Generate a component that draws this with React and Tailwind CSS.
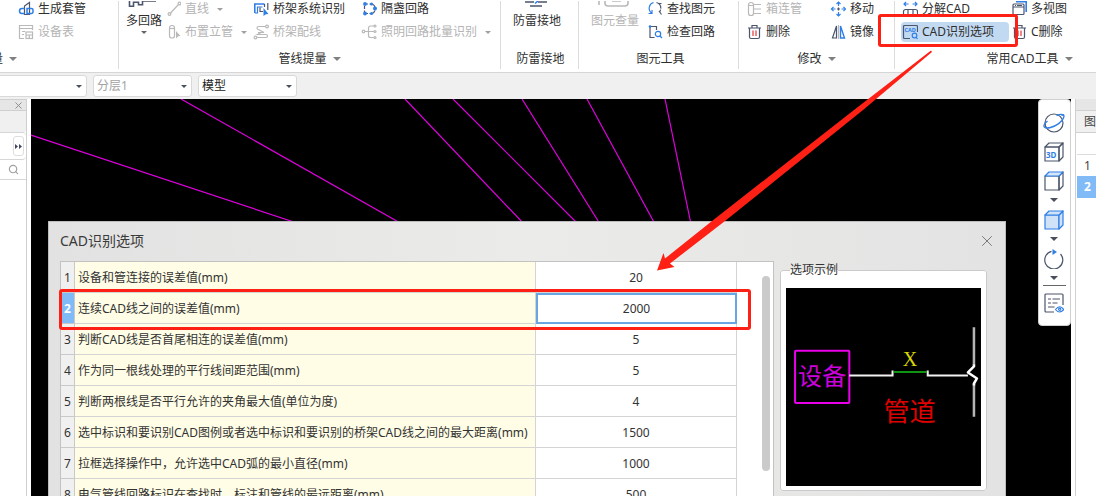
import { useState } from 'react';
import { X, Search } from 'lucide-react';

const INK = '#4b556b';
const BLUE = '#2f7fe6';
const GRAY = '#b9b9b9';

// Small triangle used by every drop-down
const Caret = ({ className = 'text-[#808080]' }) => (
  <svg width="8" height="4" viewBox="0 0 8 4" className={`shrink-0 ${className}`} aria-hidden="true">
    <path d="M0 0h8L4 4z" fill="currentColor" />
  </svg>
);

const SmallCaret = ({ className = 'text-[#4a4f60]' }) => (
  <svg width="6" height="3" viewBox="0 0 6 3" className={`shrink-0 ${className}`} aria-hidden="true">
    <path d="M0 0h6L3 3z" fill="currentColor" />
  </svg>
);

const Glyph = ({ size = 16, color = INK, children }) => (
  <svg width={size} height={size} viewBox={`0 0 ${size} ${size}`} fill="none" stroke={color} strokeWidth="1.2" className="shrink-0" aria-hidden="true">
    {children}
  </svg>
);

const icons = {
  sleeve: (
    <Glyph>
      <path d="M6.5 13.500V5L11.500 1.500V13.500z" />
      <path d="M6.500 7.500H4a2.500 2.500 0 0 0 0 5h2.500" stroke={BLUE} strokeWidth="1.500" />
      <path d="M9 7.500h4.500a1.500 1.500 0 0 1 1.500 1.500v2a1.500 1.500 0 0 1-1.500 1.500H9z" stroke={BLUE} strokeWidth="1.500" />
    </Glyph>
  ),
  deviceTable: (
    <Glyph color={GRAY}>
      <path d="M6 14.5H1.5v-13h13V6M1.5 4.5h13M4 7.5h3M4 10.5h2" />
      <rect x="8" y="8" width="6.5" height="6.5" />
      <path d="M8 11h6.5M11.3 11v3.5" />
    </Glyph>
  ),
  line: (
    <Glyph color={GRAY}>
      <circle cx="4.5" cy="13" r="1.4" />
      <circle cx="14.500" cy="2.500" r="1.4" />
      <path d="M5.500 12L13.500 3.500" />
    </Glyph>
  ),
  riser: (
    <Glyph color={GRAY}>
      <rect x="4.5" y="1.5" width="5" height="12.5" rx="2.3" />
      <path d="M4.5 4.5h5" />
      <path d="M11 7l4.500 5-2.300.2-2.200 2.300z" fill={GRAY} stroke="none" />
    </Glyph>
  ),
  tray: (
    <Glyph>
      <path d="M1.800 12V3h9.700" stroke={BLUE} strokeWidth="1.600" />
      <path d="M1.800 12h2.700V6h5" stroke={BLUE} />
      <path d="M14.800 2v7M7 6.500v4h3M11.500 3v3" />
      <path d="M10.500 7l5 6-2.600.2-2.400 1.800z" fill={BLUE} stroke="none" />
    </Glyph>
  ),
  trayWire: (
    <Glyph color={GRAY}>
      <circle cx="14" cy="2.500" r="1.400" />
      <circle cx="2.500" cy="13.500" r="1.400" />
      <path d="M12.500 2.500H5.500a1.500 1.500 0 0 0 0 3L11 8.500H5M4 13.500h9a1.500 1.500 0 0 0 0-3H4.500L8 8.500" />
    </Glyph>
  ),
  loop: (
    <Glyph>
      <path d="M4 3h7M4 12.500h7M3.500 5v6" strokeDasharray="3 1.500" />
      <path d="M11 3a5 5 0 0 1 3 3M11 12.500a5 5 0 0 0 3-3" />
      <circle cx="4" cy="3" r="1.900" fill={BLUE} stroke="none" />
      <circle cx="4" cy="12.500" r="1.900" fill={BLUE} stroke="none" />
      <circle cx="14" cy="7.500" r="2" fill={BLUE} stroke="none" />
      <circle cx="10.500" cy="3" r="1.600" fill={BLUE} stroke="none" />
      <circle cx="10.500" cy="12.500" r="1.600" fill={BLUE} stroke="none" />
    </Glyph>
  ),
  lighting: (
    <Glyph color={GRAY}>
      <circle cx="2.500" cy="7.500" r="1.300" />
      <path d="M4 7.500h9M13 2H9.500a2 2 0 0 0-2 2v7.500a2 2 0 0 0 2 2H13" />
      <circle cx="14" cy="2" r="1" />
      <circle cx="14" cy="7.500" r="1" />
      <circle cx="14" cy="13.500" r="1" />
    </Glyph>
  ),
  find: (
    <Glyph>
      <path d="M6.500 1.500a6 6 0 0 0-2 10.500M1.500 12.500h3.500V9" stroke={BLUE} />
      <path d="M9.500 1.500a6 6 0 0 1 3 9.500M14.500 2.500h-3.500" strokeDasharray="8 1" />
      <path d="M12 10l2.500 3.500" />
    </Glyph>
  ),
  check: (
    <Glyph>
      <path d="M3 3v10.500h4.500M3 2.500h6.500v3.500" />
      <circle cx="3" cy="2.500" r="1.300" fill={BLUE} stroke="none" />
      <circle cx="11" cy="10" r="2.700" stroke={BLUE} />
      <path d="M13 12l2 2" stroke={BLUE} />
    </Glyph>
  ),
  boxPipe: (
    <Glyph color={GRAY}>
      <rect x="2.500" y="1.500" width="5" height="13" rx="2.300" />
      <path d="M2.500 4.500h5M8 3.500h7M8 8h7M8 12.500h7" />
    </Glyph>
  ),
  trash: (
    <Glyph>
      <path d="M2 4h13M6 4V1.500h5V4M3.500 4v9a1.500 1.500 0 0 0 1.500 1.500h7a1.500 1.500 0 0 0 1.500-1.500V4" />
      <path d="M7 6.500v5.500M10 6.500v5.500" stroke="#e0393e" />
    </Glyph>
  ),
  move: (
    <Glyph color={BLUE}>
      <path d="M8.500 1v4M8.500 11v4M1.500 8h4M11.500 8h4" />
      <path d="M6.500 3l2-2 2 2M6.500 13l2 2 2-2M3.500 6l-2 2 2 2M13.500 6l2 2-2 2" />
      <path d="M8.500 6.500v3M7 8h3" stroke={INK} />
    </Glyph>
  ),
  mirror: (
    <Glyph>
      <path d="M6.500 2v12H2.500z" />
      <path d="M10.500 2v12h4z" stroke={BLUE} strokeWidth="1.400" />
      <path d="M8.500 1v14" stroke={GRAY} />
    </Glyph>
  ),
  explode: (
    <Glyph>
      <path d="M2 3h4.500M10.500 3H15M4 1L2 3l2 2M13 1l2 2-2 2" stroke={BLUE} />
      <path d="M1.500 13.500v-3a2 2 0 0 1 2-2h10a2 2 0 0 1 2 2v3zM6 8.500v5M11 8.500v5" />
    </Glyph>
  ),
  cadOptions: (
    <Glyph>
      <path d="M8 14.500H2.500a1 1 0 0 1-1-1v-11a1 1 0 0 1 1-1h12a1 1 0 0 1 1 1V8" />
      <text x="2.500" y="7.500" fontSize="5.500" fontWeight="700" fill={BLUE} stroke="none">CAD</text>
      <circle cx="12.500" cy="11.500" r="2.300" stroke={BLUE} />
      <path d="M14 13.300l1.500 1.500" stroke={BLUE} />
    </Glyph>
  ),
  views: (
    <Glyph>
      <path d="M5 .8h10.200V11" stroke={BLUE} strokeWidth="1.600" />
      <rect x="2" y="3" width="11" height="10.500" rx="1" fill="#fff" />
      <path d="M2 6h11M4 4.500h1M6 4.500h5" />
    </Glyph>
  ),
};

const RibbonItem = ({ icon, label, caret, disabled, active }) => (
  <button
    type="button"
    disabled={disabled}
    aria-pressed={active}
    className={`flex h-4 items-center gap-1 text-xs leading-4 whitespace-nowrap ${disabled ? 'text-[#b4b4b4]' : 'text-[#2f2f2f]'}`}
  >
    {icons[icon]}
    <span>{label}</span>
    {caret && <span className="pl-1"><SmallCaret className="text-[#a0a0a0]" /></span>}
  </button>
);

const BigItem = ({ label, caret, disabled, children }) => (
  <button
    type="button"
    disabled={disabled}
    className={`flex h-[39px] shrink-0 flex-col items-center text-xs leading-4 whitespace-nowrap ${disabled ? 'text-[#b4b4b4]' : 'text-[#2f2f2f]'}`}
  >
    <svg width="36" height="12" viewBox="0 0 36 12" fill="none" strokeWidth="1.600" className="shrink-0" aria-hidden="true">
      {children}
    </svg>
    <span>{label}</span>
    {caret && <span className="pt-0.5"><SmallCaret className="text-[#666]" /></span>}
  </button>
);

const Column = ({ className = '', children }) => (
  <div className={`flex shrink-0 flex-col items-start gap-[7px] ${className}`}>{children}</div>
);

const RibbonGroup = ({ label, caret, className, labelClass = 'justify-center', children }) => (
  <section className={`flex h-[68px] shrink-0 flex-col justify-between border-r border-[#dcdcdc] ${className}`}>
    <div className="flex">{children}</div>
    <div className={`flex h-5 items-center gap-1.5 text-xs text-[#2f2f2f] ${labelClass}`}>
      <span>{label}</span>
      {caret && <Caret />}
    </div>
  </section>
);

const Ribbon = () => (
  <header className="flex shrink-0 overflow-hidden border-b border-[#d6d6d6] bg-white pt-px pb-[3px]">
    <RibbonGroup label="量" caret className="w-[119px] pl-[18px]" labelClass="-ml-[27px]">
      <Column>
        <RibbonItem icon="sleeve" label="生成套管" />
        <RibbonItem icon="deviceTable" label="设备表" disabled />
      </Column>
    </RibbonGroup>

    <RibbonGroup label="管线提量" caret className="w-[382px]">
      <div className="flex pl-[7px]">
        <BigItem label="多回路" caret>
          <path d="M3.500 0v5.200h4V1.200h5v2.500h4V0M16 0h14" stroke={INK} />
        </BigItem>
        <Column className="ml-[3px] w-[88px]">
          <RibbonItem icon="line" label="直线" caret disabled />
          <RibbonItem icon="riser" label="布置立管" caret disabled />
        </Column>
        <Column className="w-[108px]">
          <RibbonItem icon="tray" label="桥架系统识别" />
          <RibbonItem icon="trayWire" label="桥架配线" disabled />
        </Column>
        <Column>
          <RibbonItem icon="loop" label="隔盏回路" />
          <RibbonItem icon="lighting" label="照明回路批量识别" caret disabled />
        </Column>
      </div>
    </RibbonGroup>

    <RibbonGroup label="防雷接地" className="w-[78px] pl-0.5">
      <div className="pl-2.5">
        <BigItem label="防雷接地">
          <path d="M6 1h9M19 1h9M11 5h12" stroke={INK} />
          <path d="M19 0l-3 2.500" stroke={BLUE} />
        </BigItem>
      </div>
    </RibbonGroup>

    <RibbonGroup label="图元工具" className="w-[160px] pl-1">
      <div className="flex pl-2">
        <BigItem label="图元查量" disabled>
          <path d="M2 0v4M8 0v2a3 3 0 0 0 3 3h17a3 3 0 0 0 3-3V0M15 0h9" stroke={GRAY} />
        </BigItem>
        <Column className="ml-2">
          <RibbonItem icon="find" label="查找图元" />
          <RibbonItem icon="check" label="检查回路" />
        </Column>
      </div>
    </RibbonGroup>

    <RibbonGroup label="修改" caret className="w-[156px]">
      <div className="flex pl-[7px]">
        <Column className="w-[84px]">
          <RibbonItem icon="boxPipe" label="箱连管" disabled />
          <RibbonItem icon="trash" label="删除" />
        </Column>
        <Column>
          <RibbonItem icon="move" label="移动" />
          <RibbonItem icon="mirror" label="镜像" />
        </Column>
      </div>
    </RibbonGroup>

    <RibbonGroup label="常用CAD工具" caret className="w-[270px]">
      <div className="flex pl-1.5">
        <div className="flex w-[108px] shrink-0 flex-col items-start gap-[5px]">
          <div className="pl-px"><RibbonItem icon="explode" label="分解CAD" /></div>
          <div className="w-full rounded bg-[#c2d9f2] py-0.5 pl-px">
            <RibbonItem icon="cadOptions" label="CAD识别选项" active />
          </div>
        </div>
        <Column className="ml-0.5">
          <RibbonItem icon="views" label="多视图" />
          <RibbonItem icon="trash" label="C删除" />
        </Column>
      </div>
    </RibbonGroup>
  </header>
);

const PickList = ({ label, options, className }) => (
  <div className={`relative ${className}`}>
    <select aria-label={label} className="block h-[22px] w-full appearance-none rounded-[3px] border border-[#d9d9d9] bg-white pl-[3px] text-xs leading-4">
      {options.map((o) => <option key={o}>{o}</option>)}
    </select>
    <span className="pointer-events-none absolute inset-y-0 right-[5px] flex items-center"><SmallCaret /></span>
  </div>
);

const FilterBar = () => (
  <div className="flex h-[26px] shrink-0 items-start gap-1.5 bg-[#f0f0f0] pt-0.5">
    <PickList label="楼层" options={['']} className="-ml-1 w-[91px]" />
    <PickList label="分层" options={['分层1']} className="w-[99px] text-[#a3a3a3]" />
    <PickList label="空间" options={['模型']} className="w-[99px] text-[#222]" />
  </div>
);

const LeftPanel = () => (
  <aside className="mr-1 flex w-[27px] shrink-0 flex-col border-r border-[#cfcfcf] bg-white">
    <div className="flex h-3 items-center justify-end border-y border-[#cfcfcf] bg-[#e6e6e6] pr-0.5">
      <button type="button" aria-label="关闭面板" className="text-[#888]"><X size={11} /></button>
    </div>
    <div className="h-[21px] bg-[#f0f0f0]" />
    <div className="flex h-7 items-center justify-end rounded-r border-y border-[#d6d6d6] pr-0.5">
      <button type="button" aria-label="展开" className="flex h-5 w-[11px] items-center justify-center rounded-[3px] border border-[#dedede]">
        <svg width="7" height="5" viewBox="0 0 7 5" className="shrink-0"><path d="M0 0l3 2.500L0 5zM4 0l3 2.500L4 5z" fill="#434a60" /></svg>
      </button>
    </div>
    <div className="flex h-5 items-center justify-end border-b border-[#d6d6d6] pr-[7px]">
      <button type="button" aria-label="搜索" className="text-[#a0a0a0]"><Search size={11} strokeWidth={2.500} /></button>
    </div>
  </aside>
);

const RightPanel = () => (
  <aside className="ml-1 flex w-[21px] shrink-0 flex-col overflow-hidden border-l border-[#d0d0d0] bg-white text-xs text-[#444]">
    <div className="h-3 border-b border-[#d0d0d0] bg-[#e6e6e6]" />
    <div className="flex h-[22px] items-center border-b border-[#d0d0d0] bg-[#f0f0f0] pl-2 whitespace-nowrap">图</div>
    <ol className="flex flex-col pt-[21px] pl-px">
      <li className="flex h-[22px] items-center border-t border-[#dcdcdc] pl-[7px]">1</li>
      <li className="flex h-[22px] items-center bg-[#80bbf8] pl-[7px] font-bold text-white">2</li>
    </ol>
  </aside>
);

const Cube = ({ fill = 'none', stroke = INK, top = 'none', topStroke = INK, children }) => (
  <Glyph size={20} color={stroke}>
    <path d="M1 5h14v14H1z" fill={fill} strokeLinejoin="round" />
    <path d="M15 5l4-4v14l-4 4z" fill={fill} strokeLinejoin="round" />
    <path d="M1 5l4-4h14l-4 4z" fill={top} stroke={topStroke} strokeLinejoin="round" />
    {children}
  </Glyph>
);

const ViewTool = ({ label, children }) => (
  <button type="button" aria-label={label} className="flex h-[29px] items-center justify-center">{children}</button>
);

const ViewMenu = ({ label }) => (
  <button type="button" aria-label={label} className="flex h-2.5 items-center justify-center"><Caret className="text-[#4b4f5c]" /></button>
);

const ViewTools = () => (
  <nav className="relative flex w-[33px] shrink-0 flex-col self-start rounded border border-[#cfcfcf] bg-white pt-2 pr-0.5 pb-2">
    <ViewTool label="动态观察">
      <Glyph size={22}>
        <circle cx="11" cy="11" r="9" />
        <path d="M18.500 3.500C20.500 1.800 21.500 3 20.500 6c-1.500 4-7 8-13 9.500-4 1-7 .5-6.500-2 .3-1.500 1.500-3 3.500-4.500" stroke={BLUE} strokeWidth="1.400" />
        <path d="M13.500 3.500c3-1.200 6-1.500 7 0" stroke={BLUE} strokeWidth="1.400" />
      </Glyph>
    </ViewTool>
    <ViewTool label="三维">
      <Cube><text x="2" y="15.500" fontSize="8" fontWeight="700" fill={BLUE} stroke="none">3D</text></Cube>
    </ViewTool>
    <ViewTool label="俯视"><Cube top="#d6e7fb" topStroke={BLUE} /></ViewTool>
    <ViewMenu label="视角" />
    <ViewTool label="实体显示"><Cube fill="#cfe2f8" stroke={BLUE} top="#cfe2f8" topStroke={BLUE} /></ViewTool>
    <ViewMenu label="显示方式" />
    <ViewTool label="旋转">
      <Glyph size={20}>
        <path d="M7.500 2.300A9 9 0 1 0 16.500 5" />
        <path d="M8.500 0L13 3 8.500 6z" fill={BLUE} stroke="none" />
      </Glyph>
    </ViewTool>
    <ViewMenu label="旋转方式" />
    <hr className="mr-0.5 ml-1 my-0.5 border-[#666]" />
    <ViewTool label="显示设置">
      <Glyph size={20}>
        <path d="M10 19H2a1 1 0 0 1-1-1V2a1 1 0 0 1 1-1h16a1 1 0 0 1 1 1v10" />
        <path d="M4 6h3M8.500 6H16M4 10h3M8.500 10h5M4 14h6.500" />
        <path d="M11.500 16.500q4.300-5.500 8.300 0q-4.300 5-8.300 0z" stroke={BLUE} />
        <circle cx="15.700" cy="16.300" r="1.100" stroke={BLUE} />
      </Glyph>
    </ViewTool>
  </nav>
);

// Wires of the drawing that stay visible around the dialog
const Wires = () => (
  <svg width="960" height="125" viewBox="31 99 960 125" stroke="#e000e0" strokeWidth="1.200" className="block" aria-hidden="true">
    <path d="M31 135L300 224M181 99L402 224M405 99L524 224M453 99L578 224M522 99L600 224M587 99L655 224M665 99L691 224" />
  </svg>
);

const initialOptions = [
  { label: '设备和管连接的误差值(mm)', value: '20' },
  { label: '连续CAD线之间的误差值(mm)', value: '2000' },
  { label: '判断CAD线是否首尾相连的误差值(mm)', value: '5' },
  { label: '作为同一根线处理的平行线间距范围(mm)', value: '5' },
  { label: '判断两根线是否平行允许的夹角最大值(单位为度)', value: '4' },
  { label: '选中标识和要识别CAD图例或者选中标识和要识别的桥架CAD线之间的最大距离(mm)', value: '1500' },
  { label: '拉框选择操作中，允许选中CAD弧的最小直径(mm)', value: '1000' },
  { label: '电气管线回路标识在查找时，标注和管线的最远距离(mm)', value: '500' },
];

const OptionTable = () => {
  const [options, setOptions] = useState(initialOptions);
  const [selected, setSelected] = useState(1);

  const change = (index, value) =>
    setOptions((prev) => prev.map((o, i) => (i === index ? { ...o, value } : o)));

  return (
    <table className="w-[676px] table-fixed border-separate border-spacing-0 text-xs text-[#333]">
      <colgroup>
        <col className="w-[14px]" />
        <col className="w-[461px]" />
        <col className="w-[201px]" />
      </colgroup>
      <tbody>
        {options.map((o, i) => (
          <tr key={o.label}>
            <td className={`h-[31px] border-r border-b border-[#c9c9c9] p-0 pt-0.5 text-center ${i === selected ? 'bg-[#80bbf8] font-bold text-white' : 'bg-[#f0f0f0]'}`}>
              {i + 1}
            </td>
            <th scope="row" className="h-[31px] border-r border-b border-[#d4d4d4] bg-[#fffde6] pt-0.5 pb-0 pl-[3px] text-left font-normal whitespace-nowrap">
              <label htmlFor={`option-${i}`}>{o.label}</label>
            </th>
            <td className={`h-[31px] p-0 ${i === selected ? '' : 'border-r border-b border-[#d4d4d4]'}`}>
              <input
                id={`option-${i}`}
                value={o.value}
                onFocus={() => setSelected(i)}
                onChange={(e) => change(i, e.target.value)}
                className={`block w-full bg-white text-center outline-none ${i === selected ? 'h-[31px] border-2 border-[#69a5e3]' : 'h-[30px]'}`}
              />
            </td>
          </tr>
        ))}
      </tbody>
    </table>
  );
};

const Preview = () => (
  <svg viewBox="0 0 194 197" className="block w-full bg-black" fill="none" role="img" aria-label="设备与管道">
    <rect x="9" y="62.500" width="54" height="52" rx="1" stroke="#e800e8" strokeWidth="2" />
    <text x="12" y="97" fontSize="24" fill="#cc00dc">设备</text>
    <path d="M63 87h43v-5M141 82v5h40" stroke="#f2f2f2" strokeWidth="2" />
    <path d="M107 83.500h33" stroke="#16c516" strokeWidth="1.500" />
    <text x="123.500" y="78" fontSize="20" fill="#d6d600" textAnchor="middle" className="font-['Liberation_Serif',serif]">X</text>
    <path d="M187 39v38M187 95v33" stroke="#b5b5b5" strokeWidth="2.500" />
    <path d="M187 76v2l-6 6 9 6-3 5v2" stroke="#fff" strokeWidth="2.500" strokeLinejoin="round" />
    <text x="97" y="132" fontSize="26" fill="#e00000">管道</text>
  </svg>
);

const OptionsDialog = () => (
  <div role="dialog" aria-labelledby="dialog-title" className="absolute top-[122px] left-[17px] w-[958px] border border-[#bdbdbd] bg-[#e4e4e4] bg-linear-to-r from-[#e2e2e2] via-[#ebebe9] to-[#e3e3e3] px-[11px] pb-4">
    <div className="flex h-[39px] items-center justify-between pb-0.5">
      <h1 id="dialog-title" className="text-sm text-[#3a3a3a]">CAD识别选项</h1>
      <button type="button" aria-label="关闭" className="-mr-0.5 text-[#777]"><X size={18} strokeWidth={1.300} /></button>
    </div>
    <div className="flex items-start gap-1.5">
      <div className="flex w-[714px] shrink-0 justify-between border border-[#c2c2c2] bg-white">
        <OptionTable />
        <div className="mt-[14px] mr-[3px] h-[195px] w-2 rounded-full bg-[#cacaca]" />
      </div>
      <fieldset className="mt-px mr-[7px] min-w-0 flex-1 rounded-[3px] border border-[#cacaca] bg-white px-[5px] pb-1">
        <legend className="ml-1 text-xs leading-4 text-[#333]">选项示例</legend>
        <div className="pt-2.5"><Preview /></div>
      </fieldset>
    </div>
  </div>
);

// Red pen marks laid over the window
const Marks = () => (
  <div className="pointer-events-none absolute inset-0">
    <div className="absolute top-[14px] left-[878px] h-[33px] w-[140px] rounded-[3px] border-3 border-[#ff2015]" />
    <div className="absolute top-[289px] left-[59px] h-[41px] w-[692px] rounded-[3px] border-3 border-[#ff2015]" />
    <svg width="290" height="230" viewBox="650 45 290 230" className="absolute top-[45px] left-[650px]" aria-hidden="true">
      <path d="M931 50.500L932 52 863 110 725 221 670 263.500 674.500 267 657 270.500 663.500 253 665 258.500 712 221 854 110z" fill="#ff2015" />
    </svg>
  </div>
);

export default function App() {
  return (
    <div className="relative flex h-screen flex-col overflow-hidden bg-white font-['Noto_Sans','Noto_Sans_CJK_SC',sans-serif]">
      <Ribbon />
      <FilterBar />
      <main className="flex min-h-0 flex-1">
        <LeftPanel />
        <div className="relative flex min-w-0 flex-1 justify-between overflow-hidden bg-black">
          <div className="min-w-0 flex-1 overflow-hidden"><Wires /></div>
          <ViewTools />
          <OptionsDialog />
        </div>
        <RightPanel />
      </main>
      <Marks />
    </div>
  );
}
